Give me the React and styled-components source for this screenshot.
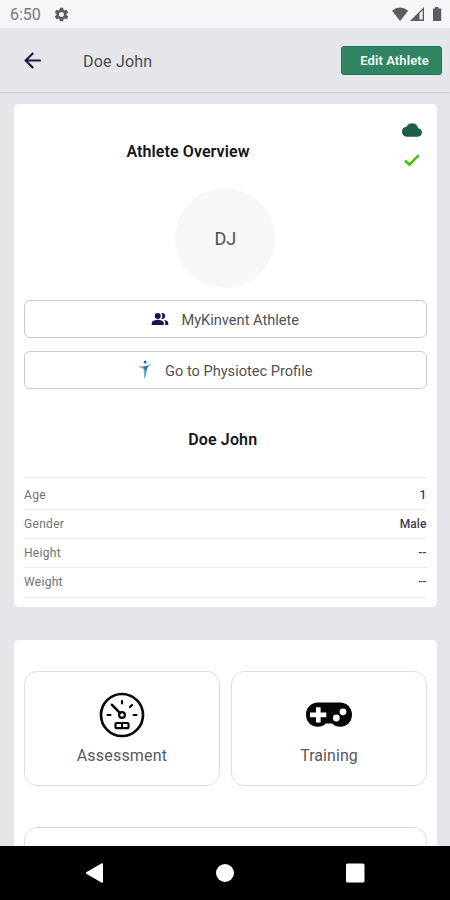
import React from "react";
import styled, { createGlobalStyle } from "styled-components";
import { MdArrowBack, MdCloud, MdPeopleAlt, MdSettings } from "react-icons/md";

const GlobalStyle = createGlobalStyle`
* { box-sizing: border-box; }
body {
  margin: 0;
  background: #e4e6ea;
  font-family: Roboto, sans-serif;
}
svg { display: block; flex: none; }
`;

const Screen = styled.div`
  display: flex;
  flex-direction: column;
  width: 450px;
  height: 900px;
  overflow: hidden;
  background: #e4e6ea;
`;

const StatusBar = styled.div`
  display: flex;
  align-items: center;
  flex: none;
  height: 28px;
  padding: 2px 8px 0 10px;
  background: #f4f6f8;
  color: #5c5d60;
`;

const Clock = styled.span`
  width: 43px;
  font-size: 16px;
  line-height: 20px;
  color: #77787b;
`;

const SettingsIcon = styled(MdSettings)`
  margin-bottom: 2px;
`;

const StatusIcons = styled.div`
  display: flex;
  align-items: center;
  margin-left: auto;
  padding-bottom: 1px;
`;

const Header = styled.div`
  display: flex;
  align-items: center;
  flex: none;
  height: 64px;
  padding: 0 8px 0 20px;
  box-shadow: 0 1px 2px rgba(0, 0, 0, 0.14);
  color: #1a1842;
`;

const HeaderTitle = styled.div`
  flex: 1;
  padding: 2px 0 0 38px;
  font-size: 16px;
  letter-spacing: 0.2px;
  color: #4b4c50;
`;

const EditButton = styled.button`
  width: 101px;
  height: 29px;
  padding: 1px 0 0 6px;
  border: 1px solid #157a52;
  border-radius: 3px;
  background: #318564;
  font-family: inherit;
  font-size: 13px;
  font-weight: 600;
  letter-spacing: 0.1px;
  white-space: nowrap;
  color: #f4faf7;
`;

const Content = styled.div`
  flex: 1;
  min-height: 0;
  overflow: hidden;
  padding: 12px 13px 0 13.5px;
`;

const Card = styled.div`
  padding: 0 10px;
  border-radius: 5px;
  background: #fff;
`;

const Overview = styled(Card)`
  height: 503px;
`;

const OverviewTop = styled.div`
  display: flex;
  justify-content: space-between;
  height: 84px;
`;

const OverviewTitle = styled.h2`
  width: 329px;
  margin: 0;
  padding-top: 38px;
  font-size: 16px;
  font-weight: 600;
  line-height: 20px;
  letter-spacing: 0.1px;
  text-align: center;
  color: #141420;
`;

const SyncState = styled.div`
  display: flex;
  flex-direction: column;
  align-items: center;
  gap: 10px;
  width: 20px;
  margin-right: 5px;
  padding-top: 16px;
`;

const Avatar = styled.div`
  display: flex;
  align-items: center;
  justify-content: center;
  width: 100px;
  height: 100px;
  margin: 0 auto 12px;
  border-radius: 50%;
  background: #f7f7f7;
  font-size: 18px;
  color: #505155;
`;

const LinkButton = styled.button`
  display: flex;
  align-items: center;
  justify-content: center;
  gap: ${props => props.$gap}px;
  width: 100%;
  height: 38px;
  margin-bottom: 13px;
  padding: 2px 0 0;
  border: 1px solid #cacacd;
  border-radius: 6px;
  background: #fff;
  font-family: inherit;
  font-size: 14.6px;
  color: #515256;

  svg {
    margin-bottom: 2px;
  }
`;

const Name = styled.h3`
  margin: 0;
  padding: 27px 5px 26px 0;
  font-size: 16px;
  font-weight: 600;
  line-height: 22px;
  letter-spacing: 0.15px;
  text-align: center;
  color: #17171c;
`;

const Details = styled.div`
  margin: 0 0.5px;
  border-top: 1px solid #e9e9eb;
`;

const DetailRow = styled.div`
  display: flex;
  align-items: center;
  justify-content: space-between;
  height: 29.2px;
  border-bottom: 1px solid #ebebed;
  font-size: 12px;
  letter-spacing: 0.3px;
  color: #707176;

  &:first-child {
    height: 32px;
    padding-top: 3px;
  }
`;

const DetailValue = styled.span`
  font-weight: 500;
  letter-spacing: 0.1px;
  color: #3f3f4c;
`;

const Actions = styled(Card)`
  display: grid;
  grid-template-columns: 196px 196px;
  grid-auto-rows: 115px;
  gap: 41px 11px;
  margin-top: 33px;
  padding: 31px 10px 0 10.5px;
`;

const Tile = styled.div`
  display: flex;
  flex-direction: column;
  align-items: center;
  grid-column: ${props => (props.$wide ? "1 / -1" : "auto")};
  padding-top: 20px;
  border: 1px solid #dedee0;
  border-radius: 13px;
`;

const TileLabel = styled.span`
  margin-top: 7px;
  font-size: 16px;
  line-height: 22px;
  letter-spacing: ${props => props.$spacing}px;
  color: #57585d;
`;

const NavBar = styled.div`
  display: flex;
  align-items: center;
  justify-content: space-between;
  flex: none;
  height: 54px;
  padding: 0 85px;
  background: #000;
`;

const StatusGlyphs = () => (
  <svg width="50" height="16" viewBox="0 0 50 16" fill="#5c5d60">
    <path d="M0 3.7Q8-2.6 16.2 3.7L8.1 14Z" />
    <path d="M18 14L32 0V14Z" />
    <path d="M27.6 6.2L30.6 3.2V12.6H27.6Z" fill="#f4f6f8" />
    <path d="M41 1.6H43V0H46.5V1.6H49.2V14H41Z" />
  </svg>
);

const CheckIcon = () => (
  <svg width="20" height="20" viewBox="0 0 20 20" fill="none">
    <path d="M3 10.5L7.4 14.6L16.8 5.2" stroke="#45c414" strokeWidth="2.6" />
  </svg>
);

const PhysiotecIcon = () => (
  <svg width="14" height="20" viewBox="0 0 14 20">
    <circle cx="7.2" cy="2" r="1.5" fill="#246da8" />
    <path
      d="M.2 6.1C4 7 8.6 6.8 13.4 3.2C11.5 6 9.6 7.4 9.1 9.2C8.7 12 8.2 16 6 19.6C6.6 15.8 5.5 12 5.6 8.7C4 8.3 1.8 7.6.2 6.1Z"
      fill="#67a9d8"
    />
    <path d="M4.8 6.7L10 5.8C8.7 7.2 8.5 9 7.8 11.4L6.2 8.3Z" fill="#216fae" />
  </svg>
);

const GaugeIcon = () => (
  <svg width="46" height="46" viewBox="0 0 46 46" fill="none" stroke="#080808">
    <circle cx="23" cy="23" r="21" strokeWidth="2.7" />
    <circle cx="23" cy="23" r="2.9" strokeWidth="2.2" />
    <path
      d="M13 12.8L20.8 20.8"
      strokeWidth="2.6"
      strokeLinecap="round"
    />
    <path
      d="M23 9V11.5M33 13L31 15M8.5 23H11.5M34.5 23H37.5"
      strokeWidth="2.2"
      strokeLinecap="round"
    />
    <rect x="16.5" y="31" width="13" height="5.2" rx="1" strokeWidth="2.2" />
    <path d="M23 31V36" strokeWidth="2" />
  </svg>
);

const GamepadIcon = () => (
  <svg width="46" height="46" viewBox="0 0 46 46">
    <path
      d="M12 10.5H34C40.9 10.5 46 15.8 46 22.5C46 29.6 41 34.7 34.5 34.7C30.8 34.7 28.2 33.7 26.3 31.5H19.7C17.8 33.7 15.2 34.7 11.5 34.7C5 34.7 0 29.6 0 22.5C0 15.8 5.1 10.5 12 10.5Z"
      fill="#060606"
    />
    <path
      d="M10 15.3H14.6V20.6H20.3V25.2H14.6V30.6H10V25.2H4V20.6H10Z"
      fill="#fff"
    />
    <circle cx="30.3" cy="26" r="3.4" fill="#fff" />
    <circle cx="37" cy="19.8" r="3.4" fill="#fff" />
  </svg>
);

const details = [
  { label: "Age", value: "1" },
  { label: "Gender", value: "Male" },
  { label: "Height", value: "--" },
  { label: "Weight", value: "--" }
];

const App = () => (
  <>
    <GlobalStyle />
    <Screen>
      <StatusBar>
        <Clock>6:50</Clock>
        <SettingsIcon size={17} />
        <StatusIcons>
          <StatusGlyphs />
        </StatusIcons>
      </StatusBar>
      <Header>
        <MdArrowBack size={25} />
        <HeaderTitle>Doe John</HeaderTitle>
        <EditButton>Edit Athlete</EditButton>
      </Header>
      <Content>
        <Overview>
          <OverviewTop>
            <OverviewTitle>Athlete Overview</OverviewTitle>
            <SyncState>
              <MdCloud size={20} color="#1d5f43" />
              <CheckIcon />
            </SyncState>
          </OverviewTop>
          <Avatar>DJ</Avatar>
          <LinkButton $gap={12}>
            <MdPeopleAlt size={18} color="#15164d" />
            MyKinvent Athlete
          </LinkButton>
          <LinkButton $gap={13}>
            <PhysiotecIcon />
            Go to Physiotec Profile
          </LinkButton>
          <Name>Doe John</Name>
          <Details>
            {details.map(({ label, value }) => (
              <DetailRow key={label}>
                {label}
                <DetailValue>{value}</DetailValue>
              </DetailRow>
            ))}
          </Details>
        </Overview>
        <Actions>
          <Tile>
            <GaugeIcon />
            <TileLabel $spacing={0.2}>Assessment</TileLabel>
          </Tile>
          <Tile>
            <GamepadIcon />
            <TileLabel $spacing={0.05}>Training</TileLabel>
          </Tile>
          <Tile $wide />
        </Actions>
      </Content>
      <NavBar>
        <svg width="19" height="20" viewBox="0 0 19 20" fill="#fff">
          <path d="M1.3 9.2L16.8.3Q18 0 18 1.3V18.7Q18 20 16.8 19.7L1.3 10.8Q.4 10 1.3 9.2Z" />
        </svg>
        <svg width="18" height="18" viewBox="0 0 18 18" fill="#fff">
          <circle cx="9" cy="9" r="9" />
        </svg>
        <svg width="20" height="20" viewBox="0 0 20 20" fill="#fff">
          <rect x="1" y=".5" width="18.5" height="19" rx="1.5" />
        </svg>
      </NavBar>
    </Screen>
  </>
);

export default App;
